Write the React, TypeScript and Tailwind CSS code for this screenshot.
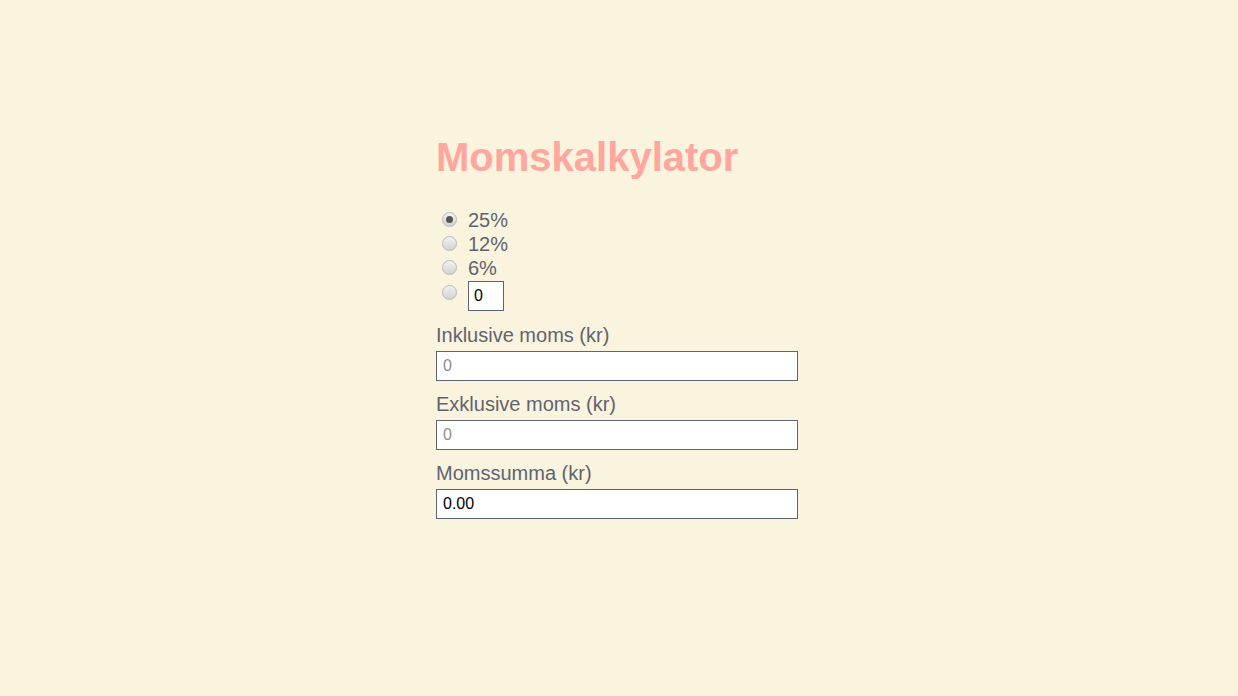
import { useState } from "react";

const rates = ["25%", "12%", "6%"];

function Radio({ checked }: { checked: boolean }) {
  return (
    <span className="flex h-[15px] w-[15px] shrink-0 items-center justify-center rounded-full border border-[#b9b9b9] bg-gradient-to-b from-[#f2f2f2] to-[#d2d2d2]">
      {checked && <span className="h-[7px] w-[7px] rounded-full bg-[#555]" />}
    </span>
  );
}

export default function App() {
  const [rate, setRate] = useState(0);

  return (
    <div className="min-h-[696px] w-full bg-[#faf3dd] font-['Liberation_Sans',Arial,sans-serif] text-[#5e6472]">
      <div className="mx-auto flex w-[366px] flex-col pt-[134px]">
        <h1 className="text-[40px] font-bold leading-[46px] text-[#ffa69e]">Momskalkylator</h1>

        {/* rate choices */}
        <div className="mt-[27px] flex flex-col">
          {rates.map((r, i) => (
            <label
              key={r}
              onClick={() => setRate(i)}
              className="flex h-6 items-center gap-[11px] pl-[6px] text-[20px] leading-6"
            >
              <Radio checked={rate === i} />
              <span className="pt-[2px]">{r}</span>
            </label>
          ))}
          <div className="mt-[2px] flex items-start gap-[11px] pl-[6px]" onClick={() => setRate(3)}>
            <span className="mt-[4px]">
              <Radio checked={rate === 3} />
            </span>
            <input
              defaultValue="0"
              className="h-[30px] w-9 border border-[#5e6472] bg-white px-[5px] text-[16px] text-black outline-none"
            />
          </div>
        </div>

        <div className="mt-[12px] flex w-[362px] flex-col">
          <label className="text-[20px] leading-[25px]">Inklusive moms (kr)</label>
          <input
            placeholder="0"
            className="mt-[3px] h-[30px] w-full border border-[#5e6472] bg-white px-[6px] text-[16px] text-black outline-none placeholder:text-[#8d8d8d]"
          />
          <label className="mt-[11px] text-[20px] leading-[25px]">Exklusive moms (kr)</label>
          <input
            placeholder="0"
            className="mt-[3px] h-[30px] w-full border border-[#5e6472] bg-white px-[6px] text-[16px] text-black outline-none placeholder:text-[#8d8d8d]"
          />
          <label className="mt-[11px] text-[20px] leading-[25px]">Momssumma (kr)</label>
          <input
            readOnly
            value="0.00"
            className="mt-[3px] h-[30px] w-full border border-[#5e6472] bg-white px-[6px] text-[16px] text-black outline-none"
          />
        </div>
      </div>
    </div>
  );
}
